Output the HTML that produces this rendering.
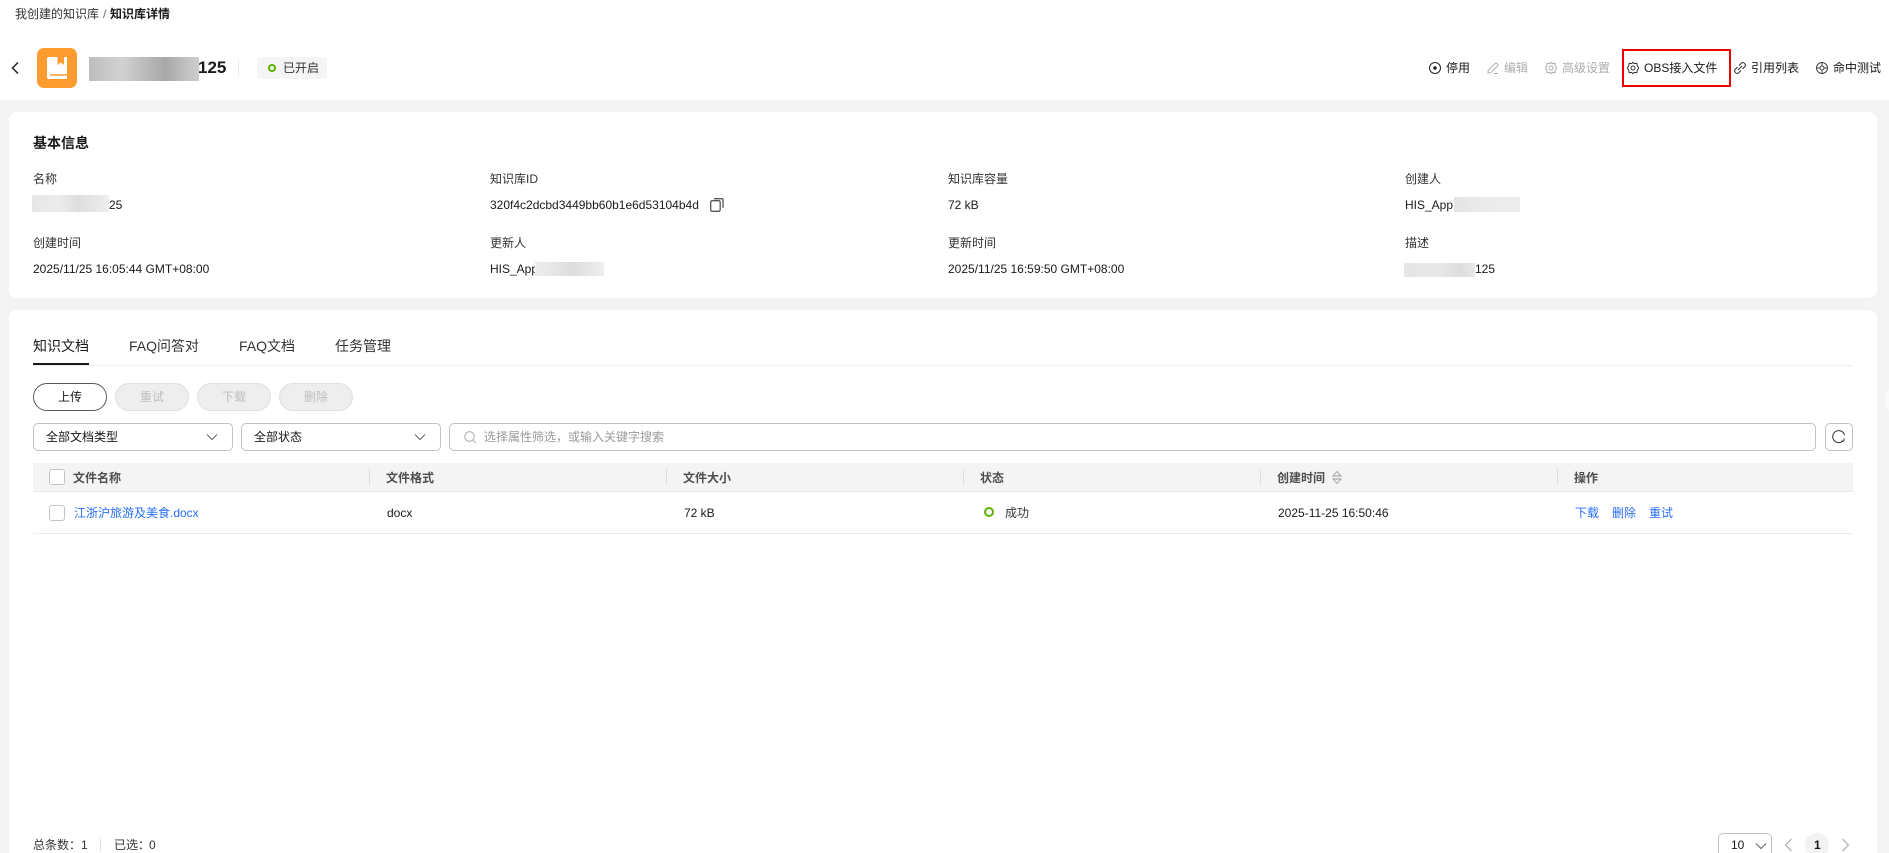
<!DOCTYPE html>
<html lang="zh-CN">
<head>
<meta charset="utf-8">
<title>知识库详情</title>
<style>
html,body{margin:0;padding:0;width:1889px;height:853px;overflow:hidden;background:#f4f4f4;}
body{position:relative;font-family:"Liberation Sans","Noto Sans CJK SC",sans-serif;font-size:12px;color:#191919;}
.a{position:absolute;white-space:nowrap;line-height:18px;}
.box{position:absolute;box-sizing:border-box;}
.b{font-weight:700;}
.g{color:#adadad;}
.h{color:#4d4d4d;font-weight:700;}
.l{color:#2a6df4;}
.blur{position:absolute;}
.btn{position:absolute;box-sizing:border-box;top:383px;width:74px;height:28px;border-radius:14px;text-align:center;line-height:26px;background:#eee;border:1px solid #e0e0e0;color:#bdbdbd;}
.sel{position:absolute;box-sizing:border-box;top:423px;height:28px;background:#fff;border:1px solid #c2c2c2;border-radius:5px;}
.cb{position:absolute;box-sizing:border-box;left:49px;width:16px;height:16px;border:1px solid #c4c4c4;border-radius:3px;background:#fff;}
.dv{position:absolute;width:1px;top:469px;height:16px;background:#dcdcdc;}
.tc{font-family:"Noto Sans CJK TC",sans-serif;}
svg{position:absolute;overflow:visible;fill:none;}
</style>
</head>
<body>
<div class="box" style="left:0;top:0;width:1889px;height:100px;background:#fff;"></div>
<div class="box" style="left:9px;top:112px;width:1868px;height:186px;background:#fff;border-radius:8px;"></div>
<div class="box" style="left:9px;top:310px;width:1868px;height:560px;background:#fff;border-radius:8px;"></div>

<!-- breadcrumb -->
<div class="a" style="left:15px;top:5px;color:#333;">我创建的知识库</div>
<div class="a" style="left:103px;top:5px;color:#666;">/</div>
<div class="a b" style="left:110px;top:5px;">知识库详情</div>

<!-- header -->
<svg style="left:0;top:0" width="30" height="90"><path d="M18 62.500L12.500 68L18 73.500" stroke="#222" stroke-width="1.500"/></svg>
<div class="box" style="left:37px;top:48px;width:40px;height:40px;background:#ff9c30;border-radius:7px;"></div>
<svg style="left:37px;top:48px" width="40" height="40"><path d="M12 9h18v22H12a2 2 0 0 1-2-2V11a2 2 0 0 1 2-2z" fill="#fff"/><path d="M20.500 9h6.500v8l-3.250-2.500-3.250 2.500z" fill="#ff9c30"/><path d="M13 27h17" stroke="#ff9c30" stroke-width="1.500"/></svg>
<div class="blur" style="left:89px;top:57px;width:110px;height:24px;background:linear-gradient(90deg,#bdbdbd 0%,#d2d2d2 30%,#bcbcbc 50%,#a8a8a8 70%,#c4c4c6 90%,#cdcdd0 100%);"></div>
<div class="a b" style="left:198px;top:56px;font-size:17px;line-height:24px;color:#191919;">125</div>
<div class="box" style="left:238px;top:60px;width:1px;height:16px;background:#e8e8e8;"></div>
<div class="box" style="left:257px;top:57px;width:70px;height:22px;background:#f4f4f4;border-radius:4px;"></div>
<svg style="left:267px;top:63px" width="10" height="10"><circle cx="5" cy="5" r="3" stroke="#5cb300" stroke-width="2"/></svg>
<div class="a" style="left:283px;top:59px;color:#333;">已开启</div>

<!-- actions -->
<svg style="left:1429px;top:62px" width="12" height="12"><circle cx="6" cy="6" r="5.500" stroke="#222" stroke-width="1"/><circle cx="6" cy="6" r="1.800" fill="#222"/></svg>
<div class="a" style="left:1446px;top:59px;">停用</div>
<svg style="left:1487px;top:62px" width="12" height="12"><path d="M6.500 11.500h4.500M1.200 8.300L8 1.500q1-1 2 0l.6.6q.8 1 0 1.800L3.800 10.700 1 11z" stroke="#adadad" stroke-width="1"/></svg>
<div class="a g" style="left:1504px;top:59px;">编辑</div>
<svg style="left:1545px;top:62px" width="12" height="12"><path d="M6 .3l1.300 1.300 2.600-.3.300 2.400L11.700 6l-1.500 2.300-.3 2.400-2.600-.3L6 11.700l-1.300-1.300-2.600.3-.3-2.400L.3 6l1.500-2.300.3-2.400 2.600.3z" stroke="#adadad" stroke-width="1" stroke-linejoin="round"/><circle cx="6" cy="6" r="2" stroke="#adadad"/></svg>
<div class="a g" style="left:1562px;top:59px;">高级设置</div>
<div class="box" style="left:1622px;top:49px;width:109px;height:38px;border:2px solid #f00000;"></div>
<svg style="left:1627px;top:62px" width="12" height="12"><path d="M6 .3l1.300 1.300 2.600-.3.300 2.400L11.700 6l-1.500 2.300-.3 2.400-2.600-.3L6 11.700l-1.300-1.300-2.600.3-.3-2.400L.3 6l1.500-2.300.3-2.400 2.600.3z" stroke="#333" stroke-width="1" stroke-linejoin="round"/><circle cx="6" cy="6" r="2" stroke="#333"/></svg>
<div class="a" style="left:1644px;top:59px;">OBS接入文件</div>
<svg style="left:1734px;top:62px" width="12" height="12"><path d="M5 3.500L7.500 1q1.200-1 2.500 0l1 1q1 1.300 0 2.500L8.500 7M7 8.500L4.500 11q-1.200 1-2.500 0l-1-1q-1-1.300 0-2.500L3.500 5M4 8L8 4" stroke="#333" stroke-width="1"/></svg>
<div class="a" style="left:1751px;top:59px;">引用列表</div>
<svg style="left:1816px;top:62px" width="12" height="12"><circle cx="6" cy="6" r="5.500" stroke="#444"/><circle cx="6" cy="6" r="2" stroke="#444"/><path d="M6 .5v3.500M6 8v3.500M.5 6H4M8 6h3.500" stroke="#444"/></svg>
<div class="a" style="left:1833px;top:59px;">命中测试</div>

<!-- basic info -->
<div class="a b" style="left:33px;top:133px;font-size:14px;line-height:20px;">基本信息</div>

<div class="a" style="left:33px;top:170px;color:#333;">名称</div>
<div class="blur" style="left:32px;top:195px;width:77px;height:17px;background:linear-gradient(90deg,#e6e6e6,#ececec 35%,#dedede 60%,#eee 100%);"></div>
<div class="a" style="left:109px;top:196px;">25</div>
<div class="a" style="left:33px;top:234px;color:#333;">创建时间</div>
<div class="a" style="left:33px;top:260px;">2025/11/25 16:05:44 GMT+08:00</div>

<div class="a" style="left:490px;top:170px;color:#333;">知识库ID</div>
<div class="a" style="left:490px;top:196px;">320f4c2dcbd3449bb60b1e6d53104b4d</div>
<svg style="left:710px;top:198px" width="14" height="14"><rect x=".7" y="2.700" width="9.500" height="10.600" rx="1.500" stroke="#555" stroke-width="1.300"/><path d="M4 .7h8a1 1 0 0 1 1 1V10" stroke="#555" stroke-width="1.300"/></svg>
<div class="a" style="left:490px;top:234px;color:#333;">更新人</div>
<div class="a" style="left:490px;top:260px;">HIS_App</div>
<div class="blur" style="left:535px;top:262px;width:69px;height:14px;background:linear-gradient(90deg,#eee,#ddd 55%,#efefef);"></div>

<div class="a" style="left:948px;top:170px;color:#333;">知识库容量</div>
<div class="a" style="left:948px;top:196px;">72 kB</div>
<div class="a" style="left:948px;top:234px;color:#333;">更新时间</div>
<div class="a" style="left:948px;top:260px;">2025/11/25 16:59:50 GMT+08:00</div>

<div class="a" style="left:1405px;top:170px;color:#333;">创建人</div>
<div class="a" style="left:1405px;top:196px;">HIS_App</div>
<div class="blur" style="left:1454px;top:197px;width:66px;height:15px;background:linear-gradient(90deg,#e4e4e4,#ebebeb 50%,#ededed);"></div>
<div class="a" style="left:1405px;top:234px;color:#333;">描述</div>
<div class="blur" style="left:1404px;top:263px;width:71px;height:14px;background:linear-gradient(90deg,#e6e6e6,#e8e8e8 50%,#ddd 80%,#e8e8e8);"></div>
<div class="a" style="left:1475px;top:260px;">125</div>

<!-- tabs -->
<div class="a" style="left:33px;top:336px;font-size:14px;line-height:20px;">知识文档</div>
<div class="a" style="left:129px;top:336px;font-size:14px;line-height:20px;color:#333;">FAQ问答对</div>
<div class="a" style="left:239px;top:336px;font-size:14px;line-height:20px;color:#333;">FAQ文档</div>
<div class="a" style="left:335px;top:336px;font-size:14px;line-height:20px;color:#333;">任务管理</div>
<div class="box" style="left:33px;top:365px;width:1820px;height:1px;background:#eee;"></div>
<div class="box" style="left:33px;top:363px;width:56px;height:2px;background:#191919;"></div>

<!-- buttons -->
<div class="btn" style="left:33px;background:#fff;border-color:#5a5a5a;color:#191919;">上传</div>
<div class="btn" style="left:115px;">重试</div>
<div class="btn" style="left:197px;">下载</div>
<div class="btn" style="left:279px;">删除</div>

<!-- filters -->
<div class="sel" style="left:33px;width:200px;"></div>
<div class="a" style="left:46px;top:428px;">全部文档类型</div>
<svg style="left:206px;top:433px" width="12" height="8"><path d="M1 1.500L6 6.500L11 1.500" stroke="#666" stroke-width="1.100"/></svg>
<div class="sel" style="left:241px;width:200px;"></div>
<div class="a" style="left:254px;top:428px;">全部状态</div>
<svg style="left:414px;top:433px" width="12" height="8"><path d="M1 1.500L6 6.500L11 1.500" stroke="#666" stroke-width="1.100"/></svg>
<div class="sel" style="left:449px;width:1367px;"></div>
<svg style="left:464px;top:431px" width="13" height="13"><circle cx="5.500" cy="5.500" r="4.800" stroke="#b5b5b5" stroke-width="1.100"/><path d="M9 9l3 3" stroke="#b5b5b5" stroke-width="1.100"/></svg>
<div class="a" style="left:484px;top:428px;color:#9a9a9a;">选择属性筛选，或输入关键字搜索</div>
<div class="sel" style="left:1825px;width:28px;"></div>
<svg style="left:1832px;top:430px" width="14" height="14"><path d="M12.500 5A6 6 0 1 0 11 10.800" stroke="#333" stroke-width="1"/><path d="M9 11.300l2.800-.3.300-2.600" stroke="#333" stroke-width="1"/></svg>

<!-- table -->
<div class="box" style="left:33px;top:463px;width:1820px;height:29px;background:#f4f4f4;border-bottom:1px solid #eaeaea;"></div>
<div class="cb" style="top:469px;"></div>
<div class="a h" style="left:73px;top:469px;">文件名称</div>
<div class="dv" style="left:369px;"></div>
<div class="a h" style="left:386px;top:469px;">文件格式</div>
<div class="dv" style="left:666px;"></div>
<div class="a h" style="left:683px;top:469px;">文件大小</div>
<div class="dv" style="left:963px;"></div>
<div class="a h" style="left:980px;top:469px;">状态</div>
<div class="dv" style="left:1260px;"></div>
<div class="a h" style="left:1277px;top:469px;">创建时间</div>
<svg style="left:1332px;top:470px" width="10" height="15"><path d="M1 6L5 1.500L9 6z" stroke="#999" stroke-width=".9"/><path d="M1 9L5 13.500L9 9z" stroke="#999" stroke-width=".9"/></svg>
<div class="dv" style="left:1557px;"></div>
<div class="a h" style="left:1574px;top:469px;">操作</div>

<div class="cb" style="top:505px;"></div>
<div class="a l" style="left:74px;top:504px;">江浙沪旅游及美食.docx</div>
<div class="a" style="left:387px;top:504px;">docx</div>
<div class="a" style="left:684px;top:504px;">72 kB</div>
<svg style="left:984px;top:507px" width="10" height="10"><circle cx="5" cy="5" r="4" stroke="#5cb300" stroke-width="2"/></svg>
<div class="a" style="left:1005px;top:504px;color:#333;">成功</div>
<div class="a" style="left:1278px;top:504px;">2025-11-25 16:50:46</div>
<div class="a l" style="left:1575px;top:504px;">下载</div>
<div class="a l" style="left:1612px;top:504px;">删除</div>
<div class="a l" style="left:1649px;top:504px;">重试</div>
<div class="box" style="left:33px;top:533px;width:1820px;height:1px;background:#ececec;"></div>

<!-- footer -->
<div class="a" style="left:33px;top:836px;color:#333;">总条数<span class="tc">：</span></div>
<div class="a" style="left:81px;top:836px;color:#333;">1</div>
<div class="box" style="left:100px;top:839px;width:1px;height:12px;background:#ddd;"></div>
<div class="a" style="left:114px;top:836px;color:#333;">已选<span class="tc">：</span></div>
<div class="a" style="left:149px;top:836px;color:#333;">0</div>

<div class="sel" style="left:1718px;top:833px;width:54px;height:30px;"></div>
<div class="a" style="left:1731px;top:836px;">10</div>
<svg style="left:1755px;top:842px" width="12" height="8"><path d="M1 1.500L6 6.500L11 1.500" stroke="#666" stroke-width="1.100"/></svg>
<svg style="left:1784px;top:838px" width="9" height="14"><path d="M7.500 1L1.500 7L7.500 13" stroke="#b5b5b5" stroke-width="1.300"/></svg>
<div class="box" style="left:1805px;top:833px;width:24px;height:24px;border-radius:50%;background:#f2f2f2;"></div>
<div class="a b" style="left:1814px;top:836px;">1</div>
<svg style="left:1841px;top:838px" width="9" height="14"><path d="M1.500 1L7.500 7L1.500 13" stroke="#b5b5b5" stroke-width="1.300"/></svg>

<!-- side handle -->
<div class="box" style="left:1885px;top:387px;width:10px;height:26px;border-radius:10px 0 0 10px;background:#f9f9f9;"></div>
</body>
</html>
